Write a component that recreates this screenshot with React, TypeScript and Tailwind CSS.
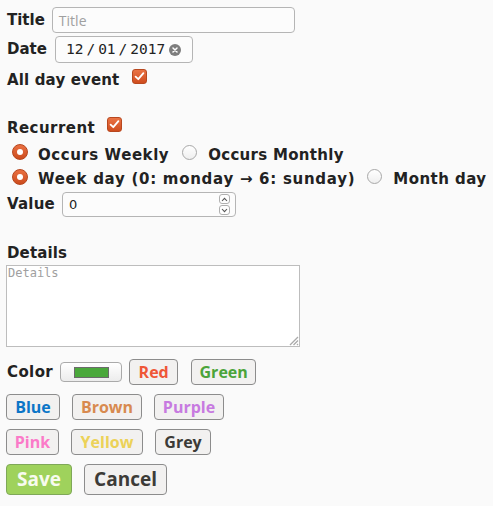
import React from "react";

const label = "font-['DejaVu_Sans',sans-serif] font-bold text-[15px] text-[#222] whitespace-nowrap";
const btn =
  "h-[26px] rounded-[4px] border border-[#8c8c8c] bg-[#f2f1f0] font-['Open_Sans',sans-serif] font-bold text-[16px] leading-none flex items-center justify-center";

function Check() {
  return (
    <span className="block w-[15px] h-[15px] rounded-[3px] bg-gradient-to-b from-[#ea7344] to-[#cf4c1d] border border-[#b8481f]">
      <svg className="block" width="13" height="13" viewBox="0 0 13 13">
        <path d="M2.6 6.6 L5.3 9.2 L10.4 3.2" stroke="#fff" strokeWidth="1.8" fill="none" strokeLinecap="round" strokeLinejoin="round" />
      </svg>
    </span>
  );
}

function Radio({ on }: { on?: boolean }) {
  if (on)
    return (
      <span className="w-[16px] h-[16px] rounded-full bg-gradient-to-b from-[#ea7041] to-[#cc4b1c] border border-[#b6461d] flex items-center justify-center">
        <span className="block w-[6px] h-[6px] rounded-full bg-white" />
      </span>
    );
  return <span className="block w-[15px] h-[15px] rounded-full bg-gradient-to-b from-white to-[#efefef] border border-[#a8a8a8]" />;
}

export default function App() {
  return (
    <div className="w-[493px] h-[506px] bg-[#fafafa] pl-[7px] pt-[7px] text-[#222]">
      <div className="flex items-center h-[26px]">
        <span className={label}>Title</span>
        <div className="ml-[7px] w-[243px] h-[26px] rounded-[4px] border border-[#b5b5b5] bg-[#fcfcfc] flex items-center pl-[6px] font-['Open_Sans',sans-serif] text-[14px] text-[#a0a0a0]">
          Title
        </div>
      </div>
      <div className="flex items-center h-[27px] mt-[3px]">
        <span className={label}>Date</span>
        <div className="ml-[8px] w-[138px] h-[27px] rounded-[4px] border border-[#b5b5b5] bg-[#fcfcfc] flex items-center pl-[10px] gap-[3px] font-['DejaVu_Sans_Mono',monospace] text-[14.5px] text-[#222]">
          <span>12</span>
          <span>/</span>
          <span>01</span>
          <span>/</span>
          <span>2017</span>
          <span className="ml-[1px] w-[12px] h-[12px] rounded-full bg-[#7d7d7d] flex items-center justify-center">
            <svg width="8" height="8" viewBox="0 0 8 8">
              <path d="M2 2 L6 6 M6 2 L2 6" stroke="#fff" strokeWidth="1.5" strokeLinecap="round" />
            </svg>
          </span>
        </div>
      </div>
      <div className="flex items-center h-[26px] mt-[4px]">
        <span className={label + " tracking-[0.15px]"}>All day event</span>
        <span className="ml-[13px] mb-[7px]">
          <Check />
        </span>
      </div>
      <div className="flex items-center h-[26px] mt-[22px]">
        <span className={label + " tracking-[0.45px]"}>Recurrent</span>
        <span className="ml-[12px] mb-[7px]">
          <Check />
        </span>
      </div>
      <div className="flex items-center h-[24px] mt-[2px]">
        <span className="ml-[5px] mb-[6px]">
          <Radio on />
        </span>
        <span className={label + " ml-[10px] tracking-[0.55px]"}>Occurs Weekly</span>
        <span className="ml-[13px] mb-[6px]">
          <Radio />
        </span>
        <span className={label + " ml-[11px] tracking-[0.3px]"}>Occurs Monthly</span>
      </div>
      <div className="flex items-center h-[24px]">
        <span className="ml-[5px] mb-[5px]">
          <Radio on />
        </span>
        <span className={label + " ml-[10px] tracking-[0.72px]"}>Week day (0: monday → 6: sunday)</span>
        <span className="ml-[12px] mb-[5px]">
          <Radio />
        </span>
        <span className={label + " ml-[11px] tracking-[0.45px]"}>Month day</span>
      </div>
      <div className="flex items-center h-[25px] mt-[1px]">
        <span className={label + " tracking-[0.2px]"}>Value</span>
        <div className="ml-[7px] w-[174px] h-[25px] rounded-[4px] border border-[#b5b5b5] bg-[#fcfcfc] flex items-center pl-[6px] pr-[5px] font-['DejaVu_Sans',sans-serif] text-[13px] text-[#222]">
          <span className="flex-1">0</span>
          <span className="flex flex-col gap-[1px]">
            <span className="w-[11px] h-[10px] rounded-[3px] border border-[#b0b0b0] bg-white flex items-center justify-center">
              <svg width="7" height="5" viewBox="0 0 7 5">
                <path d="M1 4 L3.5 1.3 L6 4" stroke="#555" strokeWidth="1.1" fill="none" />
              </svg>
            </span>
            <span className="w-[11px] h-[10px] rounded-[3px] border border-[#b0b0b0] bg-white flex items-center justify-center">
              <svg width="7" height="5" viewBox="0 0 7 5">
                <path d="M1 1 L3.5 3.7 L6 1" stroke="#555" strokeWidth="1.1" fill="none" />
              </svg>
            </span>
          </span>
        </div>
      </div>
      <div className="flex items-center h-[21px] mt-[26px]">
        <span className={label + " tracking-[0.15px]"}>Details</span>
      </div>
      <div className="relative mt-[1px] ml-[-1px] w-[294px] h-[82px] border border-[#bdbdbd] bg-white pl-[1px] font-['DejaVu_Sans_Mono',monospace] text-[12px] leading-[14px] text-[#a0a0a0]">
        Details
        <svg className="absolute right-0 bottom-0" width="12" height="12" viewBox="0 0 12 12">
          <path d="M11 3 L3 11 M11 6.5 L6.5 11 M11 10 L10 11" stroke="#aaa" strokeWidth="1.3" />
        </svg>
      </div>
      <div className="flex items-center h-[26px] mt-[12px]">
        <span className={label + " tracking-[0.4px]"}>Color</span>
        <div className="ml-[7px] w-[62px] h-[20px] rounded-[4px] border border-[#aaa] bg-gradient-to-b from-white to-[#ececec] flex items-center justify-center">
          <span className="block w-[35px] h-[11px] bg-[#4aa83b] border border-[#6b6b6b]" />
        </div>
        <div className={btn + " ml-[7px] w-[49px] text-[#ef5637]"}>Red</div>
        <div className={btn + " ml-[13px] w-[65px] text-[#4ba43a]"}>Green</div>
      </div>
      <div className="flex items-center h-[26px] mt-[9px] ml-[-1px]">
        <div className={btn + " w-[54px] text-[#0b75c7]"}>Blue</div>
        <div className={btn + " ml-[12px] w-[70px] text-[#d88a4f]"}>Brown</div>
        <div className={btn + " ml-[12px] w-[70px] text-[#c77ae0]"}>Purple</div>
      </div>
      <div className="flex items-center h-[26px] mt-[9px] ml-[-1px]">
        <div className={btn + " w-[53px] text-[#fb7ac8]"}>Pink</div>
        <div className={btn + " ml-[12px] w-[72px] text-[#ecd258]"}>Yellow</div>
        <div className={btn + " ml-[12px] w-[56px] text-[#3c3b37]"}>Grey</div>
      </div>
      <div className="flex items-center h-[31px] mt-[9px] ml-[-1px]">
        <div className="h-[31px] w-[66px] rounded-[4px] border border-[#7fa858] bg-[#9fd25c] text-[#f7fbef] font-['Open_Sans',sans-serif] font-bold text-[19px] leading-none flex items-center justify-center">
          Save
        </div>
        <div className="ml-[12px] h-[31px] w-[83px] rounded-[4px] border border-[#8c8c8c] bg-[#f2f1f0] text-[#3c3b37] font-['Open_Sans',sans-serif] font-bold text-[19px] leading-none flex items-center justify-center">
          Cancel
        </div>
      </div>
    </div>
  );
}
